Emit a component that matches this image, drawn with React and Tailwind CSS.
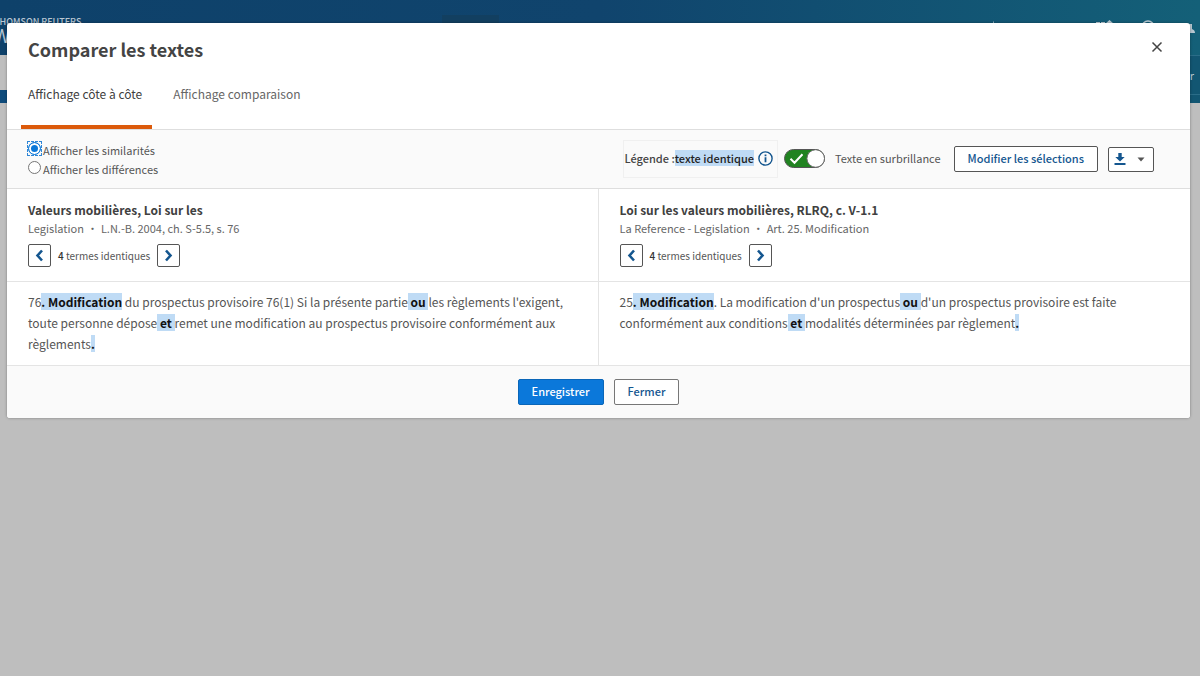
import React, { useState } from "react";

function ChevronLeft() {
  return (
    <svg width="9" height="13" viewBox="0 0 9 13" fill="none" aria-hidden="true">
      <path d="M7 1.5 2.5 6.5 7 11.5" stroke="#14568f" strokeWidth="2.6" />
    </svg>
  );
}

function ChevronRight() {
  return (
    <svg width="9" height="13" viewBox="0 0 9 13" fill="none" aria-hidden="true">
      <path d="M2 1.5 6.5 6.5 2 11.5" stroke="#14568f" strokeWidth="2.6" />
    </svg>
  );
}

function Mark({ children }) {
  return (
    <mark className="whitespace-pre-wrap bg-[#bfdbf5] font-bold text-[#111]">{children}</mark>
  );
}

function SiteHeader() {
  return (
    <div aria-hidden="true">
      <div className="flex h-[55px] items-start overflow-hidden bg-linear-to-r from-[#0e416a] via-[#10446d] to-[#146078]">
        <div className="-ml-[6px] w-[448px] pt-4 text-[#b9c6d2]">
          <div className="text-[9px] leading-[11px] font-medium">THOMSON REUTERS</div>
          <div className="text-[18px] leading-4">Westlaw</div>
        </div>
        <div className="mt-[15px] mr-auto h-6 w-[57px] bg-[#123f60]" />
        <div className="flex items-start pt-5">
          <svg width="208" height="16" viewBox="0 0 208 16" fill="none">
            <path d="M1.5 1.5v6" stroke="#8fb0c2" />
            <path d="M104 3h4m1 0h4" stroke="#b9c9d2" strokeWidth="2" />
            <path d="m113 4 4.500-4 4.500 4z" fill="#b9c9d2" />
            <circle cx="156" cy="7" r="6" stroke="#b9c9d2" strokeWidth="1.5" />
            <path d="M193 13q0-3 4-4v-5h3v5q3 1 3 4z" fill="#b9c9d2" />
          </svg>
        </div>
      </div>
      <div className="flex h-12">
        <div className="flex w-1/2 flex-col">
          <div className="h-[35px] bg-[#bebebe]" />
          <div className="flex-1 bg-[#0e4b7b]" />
        </div>
        <div className="w-1/2 border-t border-[#2b6d88] bg-[#125672] pt-[11px] pr-[6px] text-right text-[11px] leading-4 text-[#b9c9d2]">
          <div className="h-[27px]">Historique Dossier</div>
          <div className="-mr-[6px] h-px bg-[#2b6d88]" />
        </div>
      </div>
    </div>
  );
}

function RadioOption({ id, label, checked, onChange }) {
  return (
    <div className="flex h-[19px] items-start">
      <span className="mr-[2px] flex size-[13px] outline-[#2f86d6] has-checked:outline has-checked:outline-dashed">
        <input
          id={id}
          type="radio"
          name="affichage"
          checked={checked}
          onChange={onChange}
          className="size-[13px] appearance-none rounded-full border border-[#767676] bg-white checked:border-[#0b78d8] checked:bg-[#0b78d8] checked:inset-ring-2 checked:inset-ring-white"
        />
      </span>
      <label htmlFor={id}>{label}</label>
    </div>
  );
}

function Switch() {
  const [on, setOn] = useState(true);
  return (
    <div className="flex items-center gap-[10px]">
      <span className="relative flex h-[19px] w-[41px]">
        <input
          id="surbrillance"
          type="checkbox"
          role="switch"
          checked={on}
          onChange={() => setOn(!on)}
          className="h-[19px] w-[41px] appearance-none rounded-full border border-[#555] bg-[#777] checked:bg-[#218321]"
        />
        <svg
          className="pointer-events-none absolute inset-0"
          width="41"
          height="19"
          viewBox="0 0 41 19"
          fill="none"
          aria-hidden="true"
        >
          <path d="m6.5 9.8 4 4 8-8.6" stroke="#fff" strokeWidth="2" />
          <circle cx="31.7" cy="9.5" r="8.8" fill="#fff" stroke="#666" />
        </svg>
      </span>
      <label htmlFor="surbrillance">Texte en surbrillance</label>
    </div>
  );
}

function DocumentColumn({ title, source, detail, children, className }) {
  return (
    <section className={className}>
      <div className="h-[93px] border-b border-[#e4e4e4] pt-[11px] pl-[21px]">
        <h2 className="text-[12px] leading-[19px] font-bold text-[#404040]">{title}</h2>
        <p className="flex gap-[3px] text-[11px] leading-[18px] text-[#666]">
          <span>{source}</span>
          <span>•</span>
          <span>{detail}</span>
        </p>
        <div className="mt-[7px] flex items-center gap-[7px] text-[10px] leading-4 text-[#555]">
          <button
            type="button"
            aria-label="Terme précédent"
            className="flex size-[23px] items-center justify-center rounded-xs border border-[#555] bg-white"
          >
            <ChevronLeft />
          </button>
          <span>
            <b className="font-medium text-[#333]">4</b> termes identiques
          </span>
          <button
            type="button"
            aria-label="Terme suivant"
            className="flex size-[23px] items-center justify-center rounded-xs border border-[#555] bg-white"
          >
            <ChevronRight />
          </button>
        </div>
      </div>
      <p className="pt-[9px] pr-5 pb-[11px] pl-[21px] text-[12px] leading-[21px] text-[#555]">{children}</p>
    </section>
  );
}

export default function App() {
  const [mode, setMode] = useState("similarites");
  return (
    <div className="relative min-h-screen overflow-hidden bg-[#bebebe] font-['Noto_Sans_CJK_SC',sans-serif]">
      <SiteHeader />
      <div className="absolute inset-0 pt-[23px] pr-[10px] pl-[7px]">
        <main
          role="dialog"
          aria-modal="true"
          aria-labelledby="titre"
          className="overflow-hidden rounded-[3px] bg-white shadow-[0_0_3px_rgba(0,0,0,0.35)]"
        >
          <header className="flex items-start justify-between pt-[11px] pr-[27px] pl-[21px]">
            <h1 id="titre" className="text-[18px] leading-[30px] font-bold text-[#444]">
              Comparer les textes
            </h1>
            <button type="button" aria-label="Fermer la fenêtre" className="mt-[7px]">
              <svg width="12" height="12" viewBox="0 0 12 12" fill="none" aria-hidden="true">
                <path d="m1.5 1.5 9 9m0-9-9 9" stroke="#444" strokeWidth="1.5" />
              </svg>
            </button>
          </header>
          <div role="tablist" className="flex border-b border-[#dedede] pl-[14px] text-[12px] leading-5">
            <button
              type="button"
              role="tab"
              aria-selected="true"
              className="h-[65px] border-b-4 border-[#dc5a0b] pr-[10px] pb-[2px] pl-[7px] text-[#404040]"
            >
              Affichage côte à côte
            </button>
            <button
              type="button"
              role="tab"
              aria-selected="false"
              className="h-[65px] px-[21px] pb-[6px] text-[#666]"
            >
              Affichage comparaison
            </button>
          </div>
          <div className="flex h-[59px] items-center justify-between border-b border-[#dedede] bg-[#fafafa] pr-9 pl-[21px] text-[11px] leading-4 text-[#555]">
            <div role="radiogroup" aria-label="Affichage" className="pt-[3px]">
              <RadioOption
                id="similarites"
                label="Afficher les similarités"
                checked={mode === "similarites"}
                onChange={() => setMode("similarites")}
              />
              <RadioOption
                id="differences"
                label="Afficher les différences"
                checked={mode === "differences"}
                onChange={() => setMode("differences")}
              />
            </div>
            <div className="flex items-center">
              <div className="mr-[6px] flex h-[38px] items-center border border-[#f0f0f0] pr-1 pb-[2px] font-medium">
                <span className="text-[#444]">Légende :</span>
                <span className="bg-[#bfdbf5] text-[#222]">texte identique</span>
                <button type="button" aria-label="Information" className="ml-1">
                  <svg width="15" height="15" viewBox="0 0 15 15" fill="none" aria-hidden="true">
                    <circle cx="7.5" cy="7.5" r="6.6" stroke="#14568f" strokeWidth="1.4" />
                    <path d="M7.5 3.4v1.8M7.5 6.3v5" stroke="#14568f" strokeWidth="1.8" />
                  </svg>
                </button>
              </div>
              <div className="pb-[2px]">
                <Switch />
              </div>
              <button
                type="button"
                className="mr-[10px] ml-[13px] h-[26px] rounded-xs border border-[#555] bg-white px-[13px] pb-[2px] text-[11px] font-medium text-[#14568f]"
              >
                Modifier les sélections
              </button>
              <button
                type="button"
                aria-label="Télécharger"
                aria-haspopup="menu"
                className="flex h-[25px] w-[46px] items-center justify-between rounded-xs border border-[#555] bg-white pr-2 pl-[5px]"
              >
                <svg width="12" height="12" viewBox="0 0 12 12" fill="#14568f" aria-hidden="true">
                  <path d="M4.3 0h3.4v4h3L6 8.6 1.3 4h3zM.5 10h11v2H.5z" />
                </svg>
                <svg width="8" height="5" viewBox="0 0 8 5" fill="#555" aria-hidden="true">
                  <path d="M.5.5h7L4 4.5z" />
                </svg>
              </button>
            </div>
          </div>
          <div className="grid grid-cols-2">
            <DocumentColumn
              className="border-r border-[#e4e4e4]"
              title="Valeurs mobilières, Loi sur les"
              source="Legislation"
              detail="L.N.-B. 2004, ch. S-5.5, s. 76"
            >
              76<Mark>. Modification</Mark> du prospectus provisoire 76(1) Si la présente partie
              <Mark>{" ou "}</Mark>les règlements l'exigent, toute personne dépose
              <Mark>{" et "}</Mark>remet une modification au prospectus provisoire conformément aux
              règlements<Mark>.</Mark>
            </DocumentColumn>
            <DocumentColumn
              title="Loi sur les valeurs mobilières, RLRQ, c. V-1.1"
              source="La Reference - Legislation"
              detail="Art. 25. Modification"
            >
              25<Mark>. Modification</Mark>. La modification d'un prospectus
              <Mark>{" ou "}</Mark>d'un prospectus provisoire est faite conformément aux conditions
              <Mark>{" et "}</Mark>modalités déterminées par règlement<Mark>.</Mark>
            </DocumentColumn>
          </div>
          <footer className="flex justify-center gap-[10px] border-t border-[#e4e4e4] bg-[#fafafa] py-[13px] text-[11px] leading-4 font-medium">
            <button
              type="button"
              className="h-[26px] rounded-xs border border-[#0a66b8] bg-[#0b78da] px-[13px] pb-[2px] text-white"
            >
              Enregistrer
            </button>
            <button
              type="button"
              className="h-[26px] rounded-xs border border-[#777] bg-white px-[13px] pb-[2px] text-[#14568f]"
            >
              Fermer
            </button>
          </footer>
        </main>
      </div>
    </div>
  );
}
